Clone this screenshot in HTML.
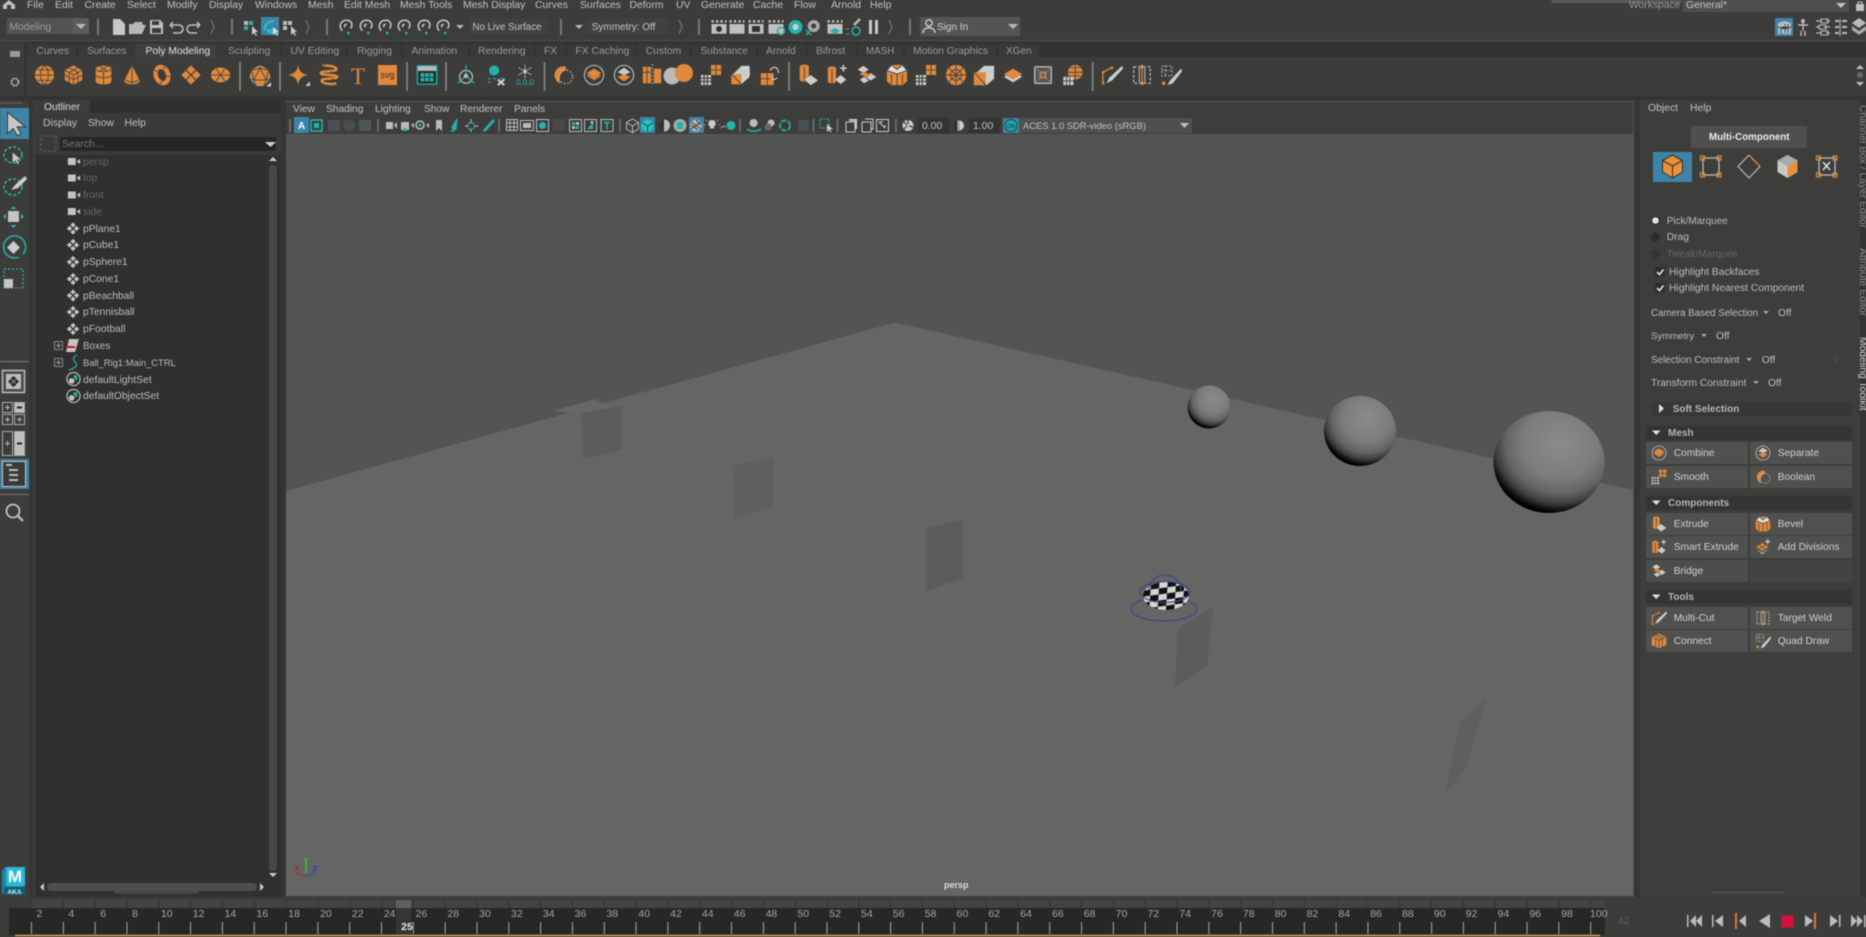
<!DOCTYPE html>
<html lang="en"><head><meta charset="utf-8"><title>Maya</title>
<style>
html,body{margin:0;padding:0;width:1866px;height:937px;overflow:hidden;background:#3c3d3b}
#w{position:absolute;left:0;top:0;width:1866px;height:937px;overflow:hidden;background:#3c3d3b;font-family:"Liberation Sans",sans-serif;filter:blur(.45px)}
.b{position:absolute}
.t{position:absolute;line-height:12px;height:12px;margin-top:1px;white-space:nowrap;font-size:10.3px;color:#bcbcba}
.m{color:#c2c2c0;font-size:10.4px}
.g{color:#9a9b99}
.d{color:#666765}
.k{color:#d0d0ce;font-size:10.2px}
.h{color:#b4b5b3;font-size:10.4px;font-weight:bold}
svg{position:absolute;left:0;top:0}
svg text{font-family:"Liberation Sans",sans-serif}
</style></head><body><div id="w">

<!-- panel backgrounds -->
<div class="b" style="left:0;top:40px;width:1866px;height:1px;background:#4a4b49"></div>
<div class="b" style="left:0;top:42px;width:1866px;height:15px;background:#323331"></div>
<div class="b" style="left:27px;top:44px;width:1012px;height:13px;background:#393a38"></div>
<div class="b" style="left:135px;top:44px;width:81px;height:13px;background:#3f403e"></div>
<div class="b" style="left:0;top:42px;width:24px;height:54px;background:#3c3d3b"></div>
<div class="b" style="left:24px;top:42px;width:3px;height:54px;background:#333432"></div>
<div class="b" style="left:0;top:96px;width:1866px;height:4px;background:#333432"></div>

<!-- top bar boxes -->
<div class="b" style="left:7px;top:18px;width:82px;height:16px;background:#535452"></div>
<div class="b" style="left:73px;top:18px;width:16px;height:16px;background:#5c5d5b"></div>
<div class="b" style="left:261px;top:17px;width:18px;height:18px;background:#3e83a8"></div>
<div class="b" style="left:470px;top:18px;width:79px;height:16px;background:#414240"></div>
<div class="b" style="left:587px;top:18px;width:82px;height:16px;background:#414240"></div>
<div class="b" style="left:920px;top:17px;width:100px;height:19px;background:#545553"></div>
<div class="b" style="left:1551px;top:0;width:131px;height:3px;background:#5a5b59;border-radius:0 0 4px 4px"></div>
<div class="b" style="left:1683px;top:0;width:166px;height:12px;background:#4f504e"></div>
<div class="b" style="left:1775px;top:18px;width:18px;height:18px;background:#3e83a8"></div>

<!-- left toolbox -->
<div class="b" style="left:29px;top:100px;width:4px;height:800px;background:#353634"></div>
<div class="b" style="left:0;top:108px;width:29px;height:31px;background:#3e83a8"></div>
<div class="b" style="left:0;top:361px;width:29px;height:1px;background:#7a7b79"></div>
<div class="b" style="left:0;top:459px;width:29px;height:30px;background:#3e83a8"></div>
<div class="b" style="left:0;top:494px;width:29px;height:1px;background:#7a7b79"></div>

<!-- outliner -->
<div class="b" style="left:35px;top:100px;width:246px;height:797px;background:#30312f"></div>
<div class="b" style="left:35px;top:113px;width:246px;height:42px;background:#3a3b39"></div>
<div class="b" style="left:35px;top:100px;width:55px;height:13px;background:#3c3d3b"></div>
<div class="b" style="left:60px;top:137px;width:216px;height:14px;background:#262725"></div>
<div class="b" style="left:269px;top:165px;width:8px;height:706px;background:#484947;border-radius:4px"></div>
<div class="b" style="left:47px;top:883px;width:210px;height:8px;background:#4e4f4d;border-radius:4px"></div>
<div class="b" style="left:281px;top:100px;width:5px;height:797px;background:#353634"></div>

<!-- viewport -->
<div class="b" style="left:286px;top:101px;width:1348px;height:796px;background:#3d3e3c;box-shadow:inset 0 1px 0 #525351,inset -1px 0 0 #525351"></div>
<div class="b" style="left:1003px;top:118px;width:16px;height:15px;background:#3e83a8"></div>
<div class="b" style="left:1019px;top:118px;width:173px;height:15px;background:#4f504e"></div>
<div class="b" style="left:918px;top:118px;width:31px;height:15px;background:#333432"></div>
<div class="b" style="left:969px;top:118px;width:31px;height:15px;background:#333432"></div>
<div class="b" style="left:640px;top:117px;width:15px;height:16px;background:#3e83a8"></div>
<div class="b" style="left:689px;top:117px;width:15px;height:16px;background:#3e83a8"></div>
<div class="b" style="left:294px;top:117px;width:15px;height:16px;background:#3e83a8"></div>

<!-- right panel -->
<div class="b" style="left:1634px;top:100px;width:6px;height:797px;background:#353634"></div>
<div class="b" style="left:1640px;top:100px;width:220px;height:800px;background:#3d3e3c"></div>
<div class="b" style="left:1860px;top:100px;width:6px;height:800px;background:#333432"></div>
<div class="b" style="left:1691px;top:126px;width:116px;height:22px;background:#4f504e"></div>
<div class="b" style="left:1653px;top:152px;width:39px;height:30px;background:#3e83a8"></div>
<div class="b" style="left:1652px;top:402px;width:200px;height:14px;background:#373836"></div>
<div class="b" style="left:1646px;top:426px;width:206px;height:14px;background:#343533"></div>
<div class="b" style="left:1646px;top:496px;width:206px;height:14px;background:#343533"></div>
<div class="b" style="left:1646px;top:590px;width:206px;height:14px;background:#343533"></div>
<div class="b" style="left:1646px;top:442px;width:102px;height:22px;background:#50514f"></div>
<div class="b" style="left:1750px;top:442px;width:102px;height:22px;background:#50514f"></div>
<div class="b" style="left:1646px;top:466px;width:102px;height:22px;background:#50514f"></div>
<div class="b" style="left:1750px;top:466px;width:102px;height:22px;background:#50514f"></div>
<div class="b" style="left:1646px;top:513px;width:102px;height:22px;background:#50514f"></div>
<div class="b" style="left:1750px;top:513px;width:102px;height:22px;background:#50514f"></div>
<div class="b" style="left:1646px;top:536px;width:102px;height:22px;background:#50514f"></div>
<div class="b" style="left:1750px;top:536px;width:102px;height:22px;background:#50514f"></div>
<div class="b" style="left:1646px;top:560px;width:102px;height:22px;background:#4d4e4c"></div>
<div class="b" style="left:1750px;top:560px;width:102px;height:22px;background:#434442"></div>
<div class="b" style="left:1646px;top:607px;width:102px;height:22px;background:#50514f"></div>
<div class="b" style="left:1750px;top:607px;width:102px;height:22px;background:#50514f"></div>
<div class="b" style="left:1646px;top:630px;width:102px;height:22px;background:#50514f"></div>
<div class="b" style="left:1750px;top:630px;width:102px;height:22px;background:#50514f"></div>

<!-- timeline bg -->
<div class="b" style="left:0;top:897px;width:1866px;height:40px;background:#3c3d3b"></div>
<div class="b" style="left:31px;top:900px;width:1574px;height:8px;background:#434442"></div>
<div class="b" style="left:9px;top:908px;width:1596px;height:27px;background:#272826"></div>
<div class="b" style="left:396px;top:900px;width:15px;height:8px;background:#5f605e"></div>
<div class="b" style="left:396px;top:908px;width:15px;height:27px;background:#363735"></div>

<!-- main overlay svg -->
<svg width="1866" height="937" viewBox="0 0 1866 937" xmlns="http://www.w3.org/2000/svg">
<defs>
<pattern id="chk" width="17" height="12" patternUnits="userSpaceOnUse" patternTransform="rotate(-8) skewX(-12)">
<rect width="17" height="12" fill="#d4d4d4"/><rect width="8.500" height="6" fill="#111"/><rect x="8.500" y="6" width="8.500" height="6" fill="#111"/></pattern>
<radialGradient id="sg" cx="60%" cy="32%" r="68%"><stop offset="0" stop-color="#8a8c89"/><stop offset=".5" stop-color="#7b7d7a"/><stop offset=".72" stop-color="#636562"/><stop offset=".86" stop-color="#3e3f3d"/><stop offset=".95" stop-color="#121212"/><stop offset="1" stop-color="#000"/></radialGradient>
<symbol id="sph" viewBox="0 0 24 24"><circle cx="12" cy="12" r="11" fill="#e0883b"/><path d="M1 12h22M3.500 6h17M3.500 18h17M12 1c-6 5-6 17 0 22M12 1c6 5 6 17 0 22" stroke="#44443f" fill="none"/></symbol>
<symbol id="cub" viewBox="0 0 24 24"><path d="M12 1L22 6.500V18L12 23L2 18V6.500z" fill="#e0883b"/><path d="M2 6.500L12 12L22 6.500M12 12V23M7 3.800L17 9.200M17 3.800L7 9.200M2 12L12 17.500L22 12M7 9.200V20.500M17 9.200V20.500" stroke="#44443f" fill="none"/></symbol>
<symbol id="cyl" viewBox="0 0 24 24"><path d="M3 5c0-5 18-5 18 0V19c0 5-18 5-18 0z" fill="#e0883b"/><path d="M3 5c0 4 18 4 18 0M3 12c0 4 18 4 18 0M12 8V23M7 1.500L17 8M17 1.500L7 8" stroke="#44443f" fill="none"/></symbol>
<symbol id="con" viewBox="0 0 24 24"><path d="M12 1L21 19c-2 5-16 5-18 0z" fill="#e0883b"/><path d="M4 17c2 4 14 4 16 0M12 1V23" stroke="#44443f" fill="none"/></symbol>
<symbol id="tor" viewBox="0 0 24 24"><ellipse cx="12" cy="12" rx="7" ry="9.500" fill="none" stroke="#e0883b" stroke-width="5" transform="rotate(-20 12 12)"/><path d="M3 6l5 3M16 1l-2 5M22 14l-5-1M10 23l2-5" stroke="#44443f"/></symbol>
<symbol id="pla" viewBox="0 0 24 24"><path d="M12 1L23 12L12 23L1 12z" fill="#e0883b"/><path d="M6.500 6.500L17.500 17.500M17.500 6.500L6.500 17.500" stroke="#44443f" stroke-width="1.400"/></symbol>
<symbol id="dis" viewBox="0 0 24 24"><ellipse cx="12" cy="12" rx="11" ry="8.500" fill="#e0883b"/><path d="M1 12h22M7 5l10 14M17 5L7 19" stroke="#44443f" fill="none"/></symbol>
<symbol id="plt" viewBox="0 0 24 24"><path d="M12 1L21 6 23 15 16 23H8L1 15 3 6z" fill="#e0883b" stroke="#bbb" stroke-width=".6"/><path d="M12 4L5 17H19zM12 1V4M3 6L12 4 21 6M1 15L5 17 8 23M23 15L19 17 16 23M5 17L3 6M19 17 21 6" stroke="#44443f" fill="none"/><path d="M24 24V19L19 24z" fill="#ccc"/></symbol>
<symbol id="str" viewBox="0 0 24 24"><path d="M11 1C12 8 15 11 22 12C15 13 12 16 11 23C10 16 7 13 0 12C7 11 10 8 11 1z" fill="#e0883b"/><path d="M24 24V19L19 24z" fill="#ccc"/></symbol>
<symbol id="hel" viewBox="0 0 24 24"><path d="M5 2C11 1 21 3 20 6C18 9 4 7 3 10C3 13 21 11 21 14C20 17 4 15 4 18C4 21 13 23 20 21" fill="none" stroke="#e0883b" stroke-width="2.800"/><path d="M8 1l-3 3M16 8l-3 2M7 13l3 2M17 16l-3 2" stroke="#44443f"/></symbol>
<symbol id="tbl" viewBox="0 0 24 24"><rect x="1.500" y="2" width="21" height="20" fill="#2b2c2a" stroke="#23b3ae" stroke-width="1.400"/><rect x="2" y="2.500" width="20" height="5" fill="#bbb"/><path d="M5 10h4v4H5zM10 10h4v4h-4zM15 10h4v4h-4zM5 15h4v4H5zM10 15h4v4h-4zM15 15h4v4h-4z" fill="#23b3ae"/></symbol>
<symbol id="lct" viewBox="0 0 24 24"><circle cx="12" cy="14" r="7" fill="none" stroke="#bbb" stroke-width="1.400"/><path d="M12 1V13M12 13L3 21M12 13L21 21" stroke="#23b3ae" stroke-width="1.400"/><circle cx="12" cy="13" r="2.400" fill="#bbb"/></symbol>
<symbol id="pvt" viewBox="0 0 24 24"><circle cx="10" cy="7" r="5.500" fill="#23b3ae"/><path d="M10 4v3h3M3 16h3M9 16h3M16 16h6M3 20h3" stroke="#23b3ae" stroke-width="1.300" fill="none"/><path d="M14 17l7 6M21 17l-7 6" stroke="#ddd" stroke-width="2"/></symbol>
<symbol id="frz" viewBox="0 0 24 24"><path d="M12 1V15M5 4l14 8M19 4L5 12" stroke="#bbb" stroke-width="1.200" stroke-dasharray="2 1"/><circle cx="12" cy="8" r="2" fill="#ccc"/></symbol>
<symbol id="bol" viewBox="0 0 24 24"><path d="M15 3C8 1 2 7 3 14C4 18 6 20 9 21C7 15 9 9 15 7z" fill="#e0883b"/><path d="M15 3C8 1 2 7 3 14C5 12 8 9 15 7z" fill="#e0883b"/><circle cx="15" cy="14" r="7.500" fill="none" stroke="#bbb" stroke-width="1.200" stroke-dasharray="2 2"/></symbol>
<symbol id="cmb" viewBox="0 0 24 24"><circle cx="12" cy="12" r="10.500" fill="none" stroke="#bbb" stroke-width="1.200"/><path d="M12 5L20 10L12 15L4 10z" fill="#e0883b"/><path d="M4 13L12 18L20 13L12 8z" fill="#e0883b" opacity=".85"/></symbol>
<symbol id="sep" viewBox="0 0 24 24"><circle cx="12" cy="12" r="10.500" fill="none" stroke="#bbb" stroke-width="1.200"/><path d="M12 4L19 9L12 12L5 9z" fill="#ccc"/><path d="M5 14L12 11L19 14L12 19z" fill="#e0883b"/></symbol>
<symbol id="dbl" viewBox="0 0 24 24"><path d="M2 3h9v18H2z" fill="#e0883b"/><path d="M6.500 3v18M2 9h9" stroke="#44443f"/><path d="M14 5h8v16h-8z" fill="#e0883b"/><path d="M12.500 0v24" stroke="#bbb" stroke-dasharray="2 2"/></symbol>
<symbol id="sbl" viewBox="0 0 24 24"><path d="M12 1h11v11H12z" fill="#e0883b"/><path d="M17.500 1v11M12 6.500h11" stroke="#44443f"/><path d="M1 12h11v11H1z" fill="#ccc"/><path d="M4.500 12v11M8 12v11M1 15.500h11M1 19h11" stroke="#3c3d3b" stroke-width="1.200"/></symbol>
<symbol id="tri" viewBox="0 0 24 24"><path d="M13 2L22 2 22 14 13 22 3 22V12z" fill="#ccc"/><path d="M2 11H13V22H2z" fill="#e0883b"/><path d="M2 11L13 22" stroke="#44443f"/><path d="M14 5c4-3 8 0 7 5M20 13l-2 2M21 8l1 3" fill="none" stroke="#ddd" stroke-width="1.200"/></symbol>
<symbol id="tr2" viewBox="0 0 24 24"><path d="M2 10H16V23H2z" fill="#e0883b"/><path d="M2 16H16M9 10V23" stroke="#44443f"/><path d="M12 7c4-6 10-3 9 3M20 15c-3 3-5 2-7 0" fill="none" stroke="#ddd" stroke-width="1.200"/></symbol>
<symbol id="ext" viewBox="0 0 24 24"><path d="M3 3c0-3 10-3 10 0V17c0 3-10 3-10 0z" fill="#e0883b"/><path d="M8 3V20" stroke="#44443f"/><path d="M8 17L15 12L23 18L15 23z" fill="#ccc"/></symbol>
<symbol id="sme" viewBox="0 0 24 24"><path d="M2 5c0-3 9-3 9 0V19c0 3-9 3-9 0z" fill="#e0883b"/><path d="M6.500 5V22" stroke="#44443f"/><path d="M10 17L16 12L22 17L16 22z" fill="#ccc"/><path d="M19 1V8M15.500 4.500H22.500" stroke="#ddd" stroke-width="1.500"/></symbol>
<symbol id="brg" viewBox="0 0 24 24"><path d="M2 6L8 2L14 6L8 10z" fill="#ccc"/><path d="M10 14L16 10L22 14L16 18z" fill="#ccc"/><path d="M8 8L16 12L12 15L4 11z" fill="#e0883b"/><path d="M4 17L9 14L14 18L9 21z" fill="#ccc"/></symbol>
<symbol id="bev" viewBox="0 0 24 24"><path d="M6 1H18L23 7V19L18 23H6L1 19V7z" fill="#e0883b"/><path d="M6 1L12 6L18 1L23 7L12 11L1 7zM12 11V23" fill="#ddd" stroke="#44443f"/><path d="M6 11V22M18 11V22" stroke="#44443f" fill="none"/></symbol>
<symbol id="adv" viewBox="0 0 24 24"><path d="M2 12L11 6L20 12L11 18z" fill="#e0883b"/><path d="M6.500 9L15 15M15 9L6.500 15" stroke="#44443f"/><path d="M2 15L11 21L20 15L11 23z" fill="#ccc"/><path d="M19 0V8M15 4H23" stroke="#ddd" stroke-width="1.500"/></symbol>
<symbol id="mcu" viewBox="0 0 24 24"><path d="M2 9L12 4" stroke="#e0883b" stroke-width="1.400"/><path d="M2 9V22" stroke="#e0883b" stroke-width="1.400"/><circle cx="2.500" cy="9" r="1.500" fill="#e0883b"/><circle cx="12" cy="4" r="1.500" fill="#e0883b"/><circle cx="2.500" cy="21" r="1.500" fill="#e0883b"/><path d="M23 2L9 15L6 21L12 18L24 5z" fill="#ccc"/></symbol>
<symbol id="twd" viewBox="0 0 24 24"><path d="M3 3H21V21H3z" fill="none" stroke="#ccc" stroke-width="1.200" stroke-dasharray="3 2"/><path d="M9 4V20M15 4V20" stroke="#ccc"/><path d="M12 2V22" stroke="#e0883b" stroke-width="1.400"/><circle cx="12" cy="3" r="2" fill="#e0883b"/><circle cx="12" cy="21" r="2" fill="#e0883b"/></symbol>
<symbol id="qdr" viewBox="0 0 24 24"><path d="M2 2h11v11H2z" fill="none" stroke="#ccc" stroke-dasharray="2 2"/><path d="M6 2v11M2 7h11" stroke="#ccc" stroke-dasharray="2 2"/><path d="M23 5L11 18L8 23L14 21L24 8z" fill="#ccc"/><circle cx="4" cy="21" r="2" fill="#e0883b"/></symbol>
<symbol id="con2" viewBox="0 0 24 24"><path d="M12 1L23 6V18L12 23L1 18V6z" fill="#e0883b"/><path d="M1 6L12 11L23 6M12 11V23M5 4L16 9M9 2.500L20 7.500M7 9V21M17 9V21" stroke="#44443f" fill="none"/></symbol>
<symbol id="wld" viewBox="0 0 24 24"><path d="M3 3H21V21H3z" fill="#555" stroke="#bbb" stroke-width="1.500"/><path d="M3 3L21 21M21 3L3 21" stroke="#777" stroke-width="1.200"/><rect x="9" y="9" width="6" height="6" fill="none" stroke="#e0883b" stroke-width="1.500"/></symbol>
<symbol id="gbl" viewBox="0 0 24 24"><circle cx="15" cy="9" r="8" fill="#e0883b"/><path d="M7 9H23M15 1V17M9 4H21M9 13H21" stroke="#44443f"/><path d="M2 14h11v9H2z" fill="#ccc"/><path d="M5.500 14v9M9 14v9M2 18.500h11" stroke="#3c3d3b"/></symbol>
<symbol id="bg1" viewBox="0 0 24 24"><circle cx="12" cy="12" r="11" fill="#e0883b"/><path d="M1 12H23M12 1V23M4 4L20 20M20 4L4 20" stroke="#44443f"/><circle cx="12" cy="12" r="6" fill="none" stroke="#44443f"/></symbol>
<symbol id="cb1" viewBox="0 0 24 24"><path d="M12 2L23 2V16L15 23H1V12z" fill="#ccc"/><path d="M1 9H14V23H1z" fill="#e0883b"/><path d="M1 9L14 23" stroke="#44443f"/></symbol>
<symbol id="lay" viewBox="0 0 24 24"><path d="M2 14L12 8L22 14L12 20z" fill="#ccc"/><path d="M2 11L12 5L22 11L12 17z" fill="#e0883b"/></symbol>
<symbol id="dia" viewBox="0 0 16 16"><path d="M8 1L11 4L8 7L5 4zM8 9L11 12L8 15L5 12zM1 8L4 5L7 8L4 11zM9 8L12 5L15 8L12 11z" fill="#c4c4c2"/></symbol>
<symbol id="cam" viewBox="0 0 16 12"><rect x="1" y="2" width="9" height="8" fill="#c4c4c2"/><path d="M11 6L15 3V9z" fill="#c4c4c2"/></symbol>
<symbol id="set" viewBox="0 0 16 16"><circle cx="8" cy="8" r="7" fill="none" stroke="#c4c4c2" stroke-width="1.200"/><circle cx="6" cy="10" r="3" fill="#c4c4c2"/><path d="M8 4h4v5H9.500V6.500H8z" fill="#23b3ae"/></symbol>
<symbol id="arw" viewBox="0 0 24 24"><path d="M4 2L4 21L9 16.500L13 23L16 21L12.500 15H20z" fill="#c6c6c4" stroke="#2e2f2d" stroke-width=".8"/></symbol>
<symbol id="mag" viewBox="0 0 24 24"><path d="M7 17C1 10 6 3 13 3C19 3 22 9 18 14M11 12C9 10 11 8 13 9" fill="none" stroke="#c8c8c6" stroke-width="2"/><circle cx="15" cy="20" r="1.800" fill="#23b3ae"/></symbol>
<symbol id="clp" viewBox="0 0 24 24"><path d="M2 4.500h20" stroke="#ccc" stroke-width="3" stroke-dasharray="3 3"/><rect x="2" y="8" width="20" height="13" fill="#c0c0be"/></symbol>
</defs>

<!-- viewport 3D -->
<rect x="286" y="134" width="1347" height="762" fill="#535552"/>
<path d="M286 491L895 322.500L1633 490V896H286z" fill="#646663"/>
<path d="M553 411L595 399L613 408L581 413z" fill="#666865"/>
<path d="M581 414L622 405V450L583 459z" fill="#5b5d5a"/>
<path d="M733 466L773 457V506L735 519z" fill="#5e605d"/>
<path d="M926 528L963 520V578L926 591z" fill="#5b5d5a"/>
<path d="M1178 629L1213 607L1207 666L1175 687z" fill="#5b5d5a"/>
<path d="M1460 722L1486 699L1466 768L1445 794z" fill="#5e605d"/>
<circle cx="1209" cy="407" r="21.500" fill="url(#sg)"/>
<ellipse cx="1360" cy="431" rx="36" ry="35" fill="url(#sg)"/>
<ellipse cx="1549" cy="462" rx="55.500" ry="51" fill="url(#sg)"/>
<!-- rig ball -->
<ellipse cx="1164" cy="609" rx="33" ry="12" fill="none" stroke="#44448a" stroke-width="1.200"/>
<ellipse cx="1166" cy="596" rx="23" ry="14" fill="url(#chk)"/>
<ellipse cx="1165" cy="592" rx="25" ry="10.500" fill="none" stroke="#44448a" stroke-width="1.200"/>
<path d="M1149 590C1150 570 1180 570 1181 590" fill="none" stroke="#44448a" stroke-width="1.200"/>
<!-- axis -->
<path d="M306 873V861" stroke="#35d035" stroke-width="1.300"/>
<path d="M296 872C300 875 303 876 306 876" stroke="#b02030" fill="none"/>
<path d="M306 876C310 876 313 874 315 872" stroke="#2a3ac0" fill="none"/>
<text x="306" y="863" font-size="7.500" font-weight="bold" fill="#35d035" text-anchor="middle">Y</text>
<text x="296.500" y="871" font-size="7.500" font-weight="bold" fill="#b02030" text-anchor="middle">X</text>
<text x="315" y="871" font-size="7.500" font-weight="bold" fill="#2a3ac0" text-anchor="middle">Z</text>

<!-- menu home -->
<path d="M3 9V5L9 0L15 5V9H11V5H7V9z" fill="#c0c0be"/>

<!-- top toolbar seps -->
<path d="M98 19v16M232 19v16M327 19v16M561 19v16M699 19v16M910 19v16" stroke="#777" stroke-width="2"/>
<path d="M211 20l3 7-3 7M306 20l3 7-3 7M679 20l3 7-3 7M889 20l3 7-3 7" stroke="#6f706e" stroke-width="1.300" fill="none"/>
<path d="M76 24h10l-5 5z" fill="#b8b8b6"/>
<path d="M456 25h8l-4 4zM575 25h8l-4 4zM1008 24h10l-5 5z" fill="#b8b8b6"/>
<!-- doc folder save undo redo -->
<path d="M113 19h7l5 5v11h-12z" fill="#c8c8c6"/>
<path d="M129 24h4l2-2h7l1 3h3l-4 9h-13z" fill="#b8b8b6"/>
<path d="M150 20h10l3 3v11h-13z" fill="#c0c0be"/><rect x="152" y="21" width="7" height="4" fill="#3c3d3b"/><rect x="152" y="28" width="9" height="5" fill="#3c3d3b"/>
<path d="M170 25h9a4 4 0 0 1 0 8h-6M170 25l3-3M170 25l3 3" fill="none" stroke="#c0c0be" stroke-width="1.500"/>
<path d="M200 25h-9a4 4 0 0 0 0 8h6M200 25l-3-3M200 25l-3 3" fill="none" stroke="#c0c0be" stroke-width="1.500"/>
<!-- selection mask -->
<rect x="244" y="21" width="4" height="4" fill="#bbb"/><rect x="249" y="21" width="4" height="4" fill="#23b3ae"/><rect x="244" y="26" width="4" height="4" fill="#23b3ae"/><path d="M252 26v9l2-2 2 3 1-1-2-3h3z" fill="#ccc"/>
<path d="M265 30c-1-5 3-9 9-9M268 30a3 3 0 1 0 6 0z" fill="none" stroke="#23d0c8" stroke-width="1.600"/><path d="M273 27v8l2-2 2 3 1-1-2-3h3z" fill="#ddd"/>
<rect x="283" y="21" width="4" height="4" fill="#bbb"/><rect x="288" y="21" width="4" height="4" fill="#bbb"/><rect x="283" y="26" width="4" height="4" fill="#bbb"/><path d="M291 26v9l2-2 2 3 1-1-2-3h3z" fill="#ccc"/>
<!-- magnets -->
<use href="#mag" x="337" y="18" width="18" height="18"/><use href="#mag" x="357" y="18" width="18" height="18"/><use href="#mag" x="376" y="18" width="18" height="18"/><use href="#mag" x="395" y="18" width="18" height="18"/><use href="#mag" x="415" y="18" width="18" height="18"/><use href="#mag" x="434" y="18" width="18" height="18"/>
<!-- render icons -->
<use href="#clp" x="710" y="18" width="18" height="18"/><circle cx="719" cy="29" r="3" fill="#333"/>
<use href="#clp" x="728" y="18" width="18" height="18"/>
<use href="#clp" x="747" y="18" width="18" height="18"/><rect x="752" y="26" width="8" height="6" fill="#333"/>
<use href="#clp" x="767" y="18" width="18" height="18"/><circle cx="781" cy="31" r="3.500" fill="none" stroke="#23b3ae" stroke-width="1.500"/>
<circle cx="795.500" cy="27" r="7" fill="#23b3ae"/><circle cx="795.500" cy="27" r="3" fill="#cfcfcf"/>
<circle cx="813.700" cy="26" r="6" fill="#aaa"/><circle cx="813.700" cy="26" r="2.500" fill="#3c3d3b"/><path d="M806 30l5 5M811 30l-5 5" stroke="#23b3ae" stroke-width="1.300"/>
<use href="#clp" x="826" y="18" width="18" height="18"/><path d="M835 28l5 3-5 3-5-3z" fill="#23b3ae"/>
<path d="M860 19l-6 6" stroke="#bbb" stroke-width="2.500"/><circle cx="856" cy="31" r="4" fill="none" stroke="#23b3ae" stroke-width="1.400"/><path d="M846 34h3M846 29h3" stroke="#23b3ae"/>
<rect x="869" y="20" width="3" height="14" fill="#c8c8c6"/><rect x="875" y="20" width="3" height="14" fill="#c8c8c6"/>
<circle cx="929" cy="23" r="3.200" fill="none" stroke="#ccc" stroke-width="1.400"/><path d="M923 33c0-7 12-7 12 0" fill="none" stroke="#ccc" stroke-width="1.400"/>
<!-- top right -->
<path d="M1836 3h10l-5 5z" fill="#c0c0be"/>
<rect x="1856" y="4" width="8" height="7" fill="#c0c0be"/>
<path d="M1858 4V2h4v2" stroke="#c0c0be" fill="none"/>
<path d="M1778 23l7-2 6 2v11h-13z" fill="#bbb"/><path d="M1778 27l7 2 6-2M1785 24v9M1788 24v9M1781 27v7" stroke="#355a70"/>
<circle cx="1803" cy="21" r="2" fill="#bbb"/><path d="M1803 23v8M1798 25h10M1801 31v5M1805 31v5" stroke="#bbb" stroke-width="1.400"/>
<path d="M1816 21h6M1826 21h4M1816 27h4M1824 27h6M1816 33h6M1826 33h4" stroke="#bbb" stroke-width="1.300"/>
<rect x="1821" y="19" width="7" height="4" fill="none" stroke="#bbb"/><rect x="1819" y="25" width="7" height="4" fill="none" stroke="#bbb"/><rect x="1821" y="31" width="7" height="4" fill="none" stroke="#bbb"/>
<path d="M1835 21h4M1835 27h4M1835 33h4M1842 21h5M1842 27h5M1842 33h5" stroke="#bbb" stroke-width="2"/><path d="M1840 19v17" stroke="#bbb"/>
<path d="M1859 18l7 5-7 5-7-5z" fill="#bbb"/><path d="M1852 26l7 5 7-5v4l-7 5-7-5z" fill="#aaa"/>
<!-- shelf -->
<path d="M10 51h10v6H10z" fill="#9a9b99"/>
<circle cx="15" cy="82" r="3.500" fill="none" stroke="#bbb" stroke-width="1.800" stroke-dasharray="2 .8"/>
<path d="M240 62v29M280 62v29M407 62v29M446 62v29M544.500 62v29M789 62v29M1092.700 62v29" stroke="#888" stroke-width="1.600"/>
<use href="#sph" x="34" y="64.500" width="21" height="21"/>
<use href="#cub" x="63" y="64.500" width="21" height="21"/>
<use href="#cyl" x="93" y="64.500" width="21" height="21"/>
<use href="#con" x="121.500" y="64.500" width="21" height="21"/>
<use href="#tor" x="151.500" y="64.500" width="21" height="21"/>
<use href="#pla" x="180.500" y="64.500" width="21" height="21"/>
<use href="#dis" x="210" y="64.500" width="21" height="21"/>
<use href="#plt" x="249" y="64.500" width="22" height="22"/>
<use href="#str" x="288" y="64" width="22" height="22"/>
<use href="#hel" x="318" y="64" width="22" height="22"/>
<text x="358" y="84" font-size="23" fill="#e0883b" text-anchor="middle" style="font-family:'Liberation Serif',serif">T</text>
<rect x="378" y="65" width="19" height="20" fill="#e0883b"/><text x="387.500" y="78" font-size="9" fill="#2e2e2e" text-anchor="middle">svg</text>
<use href="#tbl" x="416" y="64" width="22" height="22"/>
<use href="#lct" x="455" y="64" width="22" height="22"/>
<use href="#pvt" x="485" y="64" width="22" height="22"/>
<use href="#frz" x="514" y="64" width="22" height="22"/>
<text x="525" y="85" font-size="8" fill="#23b3ae" text-anchor="middle">0,0,0</text>
<use href="#bol" x="552" y="64" width="22" height="22"/>
<use href="#cmb" x="583" y="64" width="22" height="22"/>
<use href="#sep" x="613" y="64" width="22" height="22"/>
<use href="#dbl" x="641" y="64" width="22" height="22"/>
<circle cx="672" cy="76" r="8.500" fill="#bbb"/><circle cx="684" cy="73" r="9" fill="#e0883b"/>
<use href="#sbl" x="700" y="64" width="22" height="22"/>
<use href="#tri" x="729.500" y="64" width="22" height="22"/>
<use href="#tr2" x="759" y="64" width="22" height="22"/>
<use href="#ext" x="797" y="64" width="22" height="22"/>
<use href="#sme" x="826" y="64" width="22" height="22"/>
<use href="#brg" x="856" y="64" width="22" height="22"/>
<use href="#bev" x="886" y="64" width="22" height="22"/>
<use href="#sbl" x="915" y="64" width="22" height="22"/>
<use href="#bg1" x="945" y="64" width="22" height="22"/>
<use href="#cb1" x="973" y="64" width="22" height="22"/>
<use href="#lay" x="1002" y="64" width="22" height="22"/>
<use href="#wld" x="1032" y="64" width="22" height="22"/>
<use href="#gbl" x="1061.500" y="64" width="22" height="22"/>
<use href="#mcu" x="1101" y="64" width="22" height="22"/>
<use href="#twd" x="1131" y="64" width="22" height="22"/>
<use href="#qdr" x="1160" y="64" width="22" height="22"/>
<path d="M1856 69l4-4 4 4z" fill="#bbb"/><circle cx="1860" cy="75" r="3" fill="#666"/><path d="M1856 82l4 4 4-4z" fill="#bbb"/>
<!-- tab separators -->
<path d="M77 44v13M281 44v13M347 44v13M402 44v13M469 44v13M535 44v13M566 44v13M636 44v13M691 44v13M757 44v13M807 44v13M857 44v13M904 44v13M997 44v13" stroke="#323331" stroke-width="2"/>

<!-- left toolbox icons -->
<path d="M22 103h-22" stroke="#6a6b69" stroke-dasharray="1 1" stroke-width="2"/>
<use href="#arw" x="3" y="110" width="27" height="27"/>
<ellipse cx="13" cy="155" rx="9" ry="8" fill="none" stroke="#23b3ae" stroke-width="1.600" stroke-dasharray="3 2"/><use href="#arw" x="10" y="149" width="14" height="18"/>
<ellipse cx="13" cy="187" rx="9" ry="8" fill="none" stroke="#23b3ae" stroke-width="1.600" stroke-dasharray="3 2"/><path d="M25 176l-9 8-5 6 7-2 9-9z" fill="#ccc"/>
<rect x="8" y="211" width="11" height="11" fill="#c4c4c2"/><path d="M13.500 206l3 3h-6zM13.500 228l3-3h-6zM3 216.500l3-3v6zM24 216.500l-3-3v6z" fill="#23b3ae"/>
<path d="M13.500 241l6.500 6.500-6.500 6.500-6.500-6.500z" fill="#ccc"/><path d="M23 254a11 11 0 1 0-4 3" fill="none" stroke="#23b3ae" stroke-width="1.500"/>
<rect x="4" y="269" width="19" height="19" fill="none" stroke="#23b3ae" stroke-width="1.300" stroke-dasharray="2 2"/><rect x="4" y="279" width="9" height="9" fill="#c4c4c2"/>
<!-- layout buttons -->
<rect x="2.500" y="370.500" width="22" height="22" fill="#4a4b49" stroke="#c4c4c2" stroke-width="1.400"/><rect x="6" y="374" width="15" height="15" fill="#bcbcba"/>
<path d="M13.500 376l3 2.500-3 2.500-3-2.500zM13.500 382l3 2.500-3 2.500-3-2.500zM8 381.500l2.500-2.500 2.500 2.500-2.500 2.500zM14 381.500l2.500-2.500 2.500 2.500-2.500 2.500z" fill="#2a2b29"/>
<rect x="2.500" y="402.500" width="10" height="10" fill="#3c3d3b" stroke="#aaa"/><rect x="14.500" y="402.500" width="10" height="10" fill="#c0c0be" stroke="#aaa"/><rect x="2.500" y="414.500" width="10" height="10" fill="#3c3d3b" stroke="#aaa"/><rect x="14.500" y="414.500" width="10" height="10" fill="#3c3d3b" stroke="#aaa"/>
<path d="M5 407.500h5M7.500 405v5M5 419.500h5M7.500 417v5M17 419.500h5M19.500 417v5" stroke="#bbb"/><path d="M17 407.500h5" stroke="#222" stroke-width="2"/>
<rect x="2.500" y="431.500" width="10" height="24" fill="#3c3d3b" stroke="#aaa"/><rect x="14.500" y="431.500" width="10" height="24" fill="#c0c0be" stroke="#aaa"/>
<path d="M5 443.500h5M7.500 441v5" stroke="#bbb"/><path d="M17 443.500h5" stroke="#222" stroke-width="2"/>
<rect x="2.500" y="461.500" width="23" height="25" fill="#3a3b39" stroke="#c4c4c2"/><path d="M6 465h6M9 470h9M9 475h9M9 480h9" stroke="#bbb" stroke-width="2"/>
<circle cx="13" cy="511" r="6.500" fill="none" stroke="#c4c4c2" stroke-width="1.800"/><path d="M18 516l5 5" stroke="#c4c4c2" stroke-width="2.200"/>
<!-- Maya logo -->
<path d="M5 867l-3 4v22l3 2h18V867z" fill="#1689a6"/><rect x="6" y="867" width="19" height="19" fill="#2ab8d8"/>
<text x="15" y="882" font-size="17" font-weight="bold" fill="#fff" text-anchor="middle">M</text>
<rect x="4" y="887" width="21" height="8" fill="#115f74"/><text x="14.500" y="894" font-size="6.500" font-weight="bold" fill="#dfeff4" text-anchor="middle">AKA</text>

<!-- outliner icons -->
<rect x="41" y="136" width="15" height="15" fill="none" stroke="#555" stroke-width="1.600" stroke-dasharray="3 2"/>
<path d="M265 142h11l-5.500 5z" fill="#ccc"/>
<path d="M269 161l4-4 4 4z" fill="#ccc"/>
<use href="#cam" x="67" y="155.500" width="14" height="12"/><use href="#cam" x="67" y="172" width="14" height="12"/><use href="#cam" x="67" y="189" width="14" height="12"/><use href="#cam" x="67" y="205.500" width="14" height="12"/>
<use href="#dia" x="66" y="220.500" width="14" height="16"/><use href="#dia" x="66" y="237" width="14" height="16"/><use href="#dia" x="66" y="254" width="14" height="16"/><use href="#dia" x="66" y="271" width="14" height="16"/><use href="#dia" x="66" y="287.500" width="14" height="16"/><use href="#dia" x="66" y="304" width="14" height="16"/><use href="#dia" x="66" y="321" width="14" height="16"/>
<rect x="54.500" y="341.500" width="8" height="8" fill="none" stroke="#888"/><path d="M56 345.500h5M58.500 343v5" stroke="#999"/>
<rect x="54.500" y="358.500" width="8" height="8" fill="none" stroke="#888"/><path d="M56 362.500h5M58.500 360v5" stroke="#999"/>
<path d="M69 339h10l-4 13h-9z" fill="#c4c4c2"/><path d="M66 347h9" stroke="#d01030" stroke-width="2"/>
<path d="M77 355c-6 3-3 6-1 8 2 3-3 6-7 7" fill="none" stroke="#23b3ae" stroke-width="1.200"/>
<use href="#set" x="66" y="371.500" width="15" height="15"/><use href="#set" x="66" y="388.500" width="15" height="15"/>
<path d="M269 873h8l-4 4z" fill="#ccc"/><path d="M44 883l-4 4 4 4zM260 883l4 4-4 4z" fill="#ccc"/>
<path d="M115 892.500h83" stroke="#5c5d5b" stroke-width="3" stroke-dasharray="1 1"/>

<!-- viewport toolbar -->
<path d="M290 119v13M378 119v13M499 119v13M620 119v13M740 119v13M813.500 119v13M837.500 119v13M896 119v13" stroke="#777" stroke-width="1.400"/>
<text x="301.500" y="129" font-size="10" font-weight="bold" fill="#fff" text-anchor="middle">A</text>
<rect x="311" y="120" width="11" height="11" fill="none" stroke="#23b3ae" stroke-width="1.500"/><rect x="314" y="123" width="5" height="5" fill="#23b3ae"/>
<rect x="328" y="120" width="12" height="11" fill="#4a5054"/><circle cx="349" cy="125.500" r="6" fill="#4b4d4b"/><rect x="359" y="120" width="12" height="11" fill="#4a5a50"/>
<path d="M386 122h7v7h-7zM394 125l3-3v7z" fill="#bbb"/>
<path d="M401 122h8v8h-8z" fill="#bbb"/><path d="M403 131h4v-3h-4z" fill="#23b3ae"/><path d="M411 125l3-2v5z" fill="#bbb"/>
<circle cx="420" cy="125" r="4" fill="none" stroke="#bbb" stroke-width="1.500"/><circle cx="420" cy="125" r="1.600" fill="#23b3ae"/><path d="M426 125l3-2v5z" fill="#bbb"/>
<path d="M436 120h6v11l-3-3-3 3z" fill="#bbb"/>
<path d="M457 119l-5 8 1 3 3-1zM450 131h5" stroke="#23b3ae" fill="#23b3ae"/>
<circle cx="471" cy="126" r="3.500" fill="none" stroke="#23b3ae"/><path d="M471 119v4M471 129v3M465 126h3M475 126h3" stroke="#bbb"/>
<path d="M493 119l-9 10-1 3 3-1 9-10z" fill="#23b3ae"/>
<rect x="506.500" y="119.500" width="11" height="11" fill="none" stroke="#bbb"/><path d="M506 123h12M506 127h12M510 119v12M514 119v12" stroke="#bbb"/>
<rect x="520.500" y="120.500" width="13" height="10" fill="none" stroke="#bbb"/><rect x="523" y="123" width="8" height="5" fill="#bbb"/>
<rect x="536.500" y="119.500" width="12" height="12" fill="none" stroke="#bbb"/><circle cx="542.500" cy="125.500" r="3.500" fill="#23b3ae"/>
<rect x="553" y="119" width="12" height="12" fill="#484947"/>
<rect x="569.500" y="119.500" width="12" height="12" fill="none" stroke="#bbb"/><path d="M572 122h3v3h-3zM576 126h3v3h-3z" fill="#23b3ae"/><path d="M576 122h3v3h-3zM572 126h3v3h-3z" fill="#bbb"/>
<rect x="584.500" y="119.500" width="12" height="12" fill="none" stroke="#bbb"/><path d="M587 129l6-6v6z" fill="#23b3ae"/><circle cx="592" cy="122.500" r="1.500" fill="#bbb"/>
<rect x="601" y="119.500" width="12" height="12" fill="none" stroke="#bbb"/><path d="M604 122.500h6M607 122.500v7" stroke="#23b3ae" stroke-width="1.600"/>
<path d="M632.500 119l6 3.500v6.500l-6 3.500-6-3.500v-6.500zM626.500 122.500l6 3.500 6-3.500M632.500 126v6.500" fill="none" stroke="#bbb"/>
<path d="M647.500 119l6 3.500v6.500l-6 3.500-6-3.500v-6.500z" fill="#23c5c0"/><path d="M641.500 122.500l6 3.500 6-3.500M647.500 126v6.500" fill="none" stroke="#254a5c"/>
<circle cx="664" cy="125.500" r="6" fill="#bbb"/><path d="M664 119.500a6 6 0 0 0 0 12z" fill="#333"/>
<circle cx="680" cy="125.500" r="6.500" fill="#aaa"/><path d="M677 122h6v7h-6z" fill="#23b3ae"/>
<circle cx="696" cy="125.500" r="6" fill="#bbb"/><path d="M691 122l10 7M701 122l-10 7M691 125l7 5M696 120l5 5" stroke="#333"/>
<path d="M712 120a3.500 3.500 0 0 1 2 6.500v2h-4v-2a3.500 3.500 0 0 1 2-6.500z" fill="#c8c8c6"/><path d="M707 121l-1-1M717 121l1-1M705 125h-1M719 125h1" stroke="#bbb"/>
<circle cx="731" cy="125.500" r="4.500" fill="#23b3ae"/><path d="M721 128c2-2 3-2 5-1" stroke="#aaa" fill="none"/>
<circle cx="753.600" cy="123" r="4" fill="#bbb"/><path d="M747 129c4 3 10 3 14 0" fill="none" stroke="#23b3ae" stroke-width="1.500"/>
<circle cx="771" cy="123" r="3.500" fill="#bbb"/><circle cx="768" cy="127" r="3.500" fill="#666"/>
<circle cx="785" cy="125.500" r="5" fill="none" stroke="#23b3ae" stroke-width="1.700" stroke-dasharray="5 1.500"/>
<rect x="798" y="120" width="11" height="11" fill="#455058"/>
<rect x="820" y="119" width="9" height="9" fill="none" stroke="#23b3ae" stroke-dasharray="2 1.300"/><path d="M827 124v8l2-2 1.500 2.500 1-.7-1.500-2.500h3z" fill="#ccc"/>
<path d="M846 122h9v10h-9z" fill="none" stroke="#ccc"/><path d="M849 119h8v10h-2v-8h-6z" fill="#ccc"/>
<path d="M862 122h9v10h-9z" fill="none" stroke="#ccc"/><path d="M865 119h8v10h-2" fill="none" stroke="#ccc"/>
<rect x="876.500" y="119.500" width="12" height="12" fill="none" stroke="#ccc"/><path d="M879 122l6 6M879 122h4M885 128v-3" stroke="#ccc"/>
<circle cx="908" cy="125.500" r="5.500" fill="#ccc"/><path d="M908 120v4M913 127l-4-1M904 129l3-3M904 122l3 3" stroke="#333" stroke-width="1.200"/>
<circle cx="959" cy="125.500" r="5" fill="#ccc"/><rect x="954" y="120" width="5" height="11" fill="#333"/><path d="M958 120v11" stroke="#ccc"/>
<circle cx="1011" cy="125.500" r="6" fill="#1aa7a5" stroke="#222" stroke-width=".7"/><text x="1011" y="128" font-size="5.500" fill="#123" text-anchor="middle">ON</text>
<path d="M1180 123h9l-4.500 5z" fill="#bfbfbd"/>

<!-- right panel icons -->
<path d="M1672.500 155l10 5.500v11.500l-10 6-10-6v-11.500z" fill="#e9903c" stroke="#2e2e2c" stroke-width="1"/><path d="M1662.500 160.500l10 5.500 10-5.500M1672.500 166v12" fill="none" stroke="#2e2e2c"/>
<rect x="1703" y="158" width="16" height="17" fill="none" stroke="#bbb" stroke-width="1.300"/><rect x="1700.500" y="156" width="4" height="4" fill="none" stroke="#e0883b" stroke-width="1.200"/><rect x="1717" y="156" width="4" height="4" fill="none" stroke="#e0883b" stroke-width="1.200"/><rect x="1700.500" y="173" width="4" height="4" fill="none" stroke="#e0883b" stroke-width="1.200"/><rect x="1717" y="173" width="4" height="4" fill="none" stroke="#e0883b" stroke-width="1.200"/>
<path d="M1749 155l11 11.500-11 11.500-11-11.500z" fill="none" stroke="#c4c4c2" stroke-width="1.100"/><path d="M1749 155l11 11.500" stroke="#e0883b" stroke-width="1.200"/>
<path d="M1787.500 155l10 5.500v11.500l-10 6-10-6v-11.500z" fill="#c8c8c6"/><path d="M1787.500 166l10-5.500v11.500l-10 6z" fill="#e9903c"/><path d="M1777.500 160.500l10-5.500 10 5.500-10 5.500z" fill="#aaa"/>
<rect x="1819" y="158" width="16" height="17" fill="none" stroke="#bbb" stroke-width="1.300"/><rect x="1816.500" y="156" width="4" height="4" fill="none" stroke="#e0883b" stroke-width="1.200"/><rect x="1833" y="156" width="4" height="4" fill="none" stroke="#e0883b" stroke-width="1.200"/><rect x="1816.500" y="173" width="4" height="4" fill="none" stroke="#e0883b" stroke-width="1.200"/><rect x="1833" y="173" width="4" height="4" fill="none" stroke="#e0883b" stroke-width="1.200"/><path d="M1823 162l7 8M1830 162l-7 8" stroke="#ddd" stroke-width="1.600"/>
<!-- radios -->
<circle cx="1655.500" cy="220.500" r="3.800" fill="#e4e4e2" stroke="#2a2b29"/><circle cx="1655.500" cy="237" r="4.500" fill="#2c2d2b"/><circle cx="1655.500" cy="253.500" r="4.500" fill="#333432"/>
<rect x="1655" y="267" width="10" height="10" fill="#2e2f2d"/><path d="M1657 272l2.500 2.500 4-5" fill="none" stroke="#eee" stroke-width="1.500"/>
<rect x="1655" y="283" width="10" height="10" fill="#2e2f2d"/><path d="M1657 288l2.500 2.500 4-5" fill="none" stroke="#eee" stroke-width="1.500"/>
<path d="M1763 311h6l-3 3zM1701 334h6l-3 3zM1746 358h6l-3 3zM1753 381h6l-3 3z" fill="#a8a8a6"/>
<path d="M1659 404v9l5-4.500z" fill="#e0e0de"/>
<path d="M1652 430.500h8.500l-4.250 4.500zM1652 500.500h8.500l-4.250 4.500zM1652 594.500h8.500l-4.250 4.500z" fill="#dfdfdd"/>
<use href="#cmb" x="1651" y="445" width="16" height="16"/>
<use href="#sep" x="1755" y="445" width="16" height="16"/>
<use href="#sbl" x="1651" y="469" width="16" height="16"/>
<use href="#bol" x="1755" y="469" width="16" height="16"/>
<use href="#ext" x="1651" y="516" width="16" height="16"/>
<use href="#bev" x="1755" y="516" width="16" height="16"/>
<use href="#sme" x="1651" y="539" width="16" height="16"/>
<use href="#adv" x="1755" y="539" width="16" height="16"/>
<use href="#brg" x="1651" y="563" width="16" height="16"/>
<use href="#mcu" x="1651" y="610" width="16" height="16"/>
<use href="#twd" x="1755" y="610" width="16" height="16"/>
<use href="#con2" x="1651" y="633" width="16" height="16"/>
<use href="#qdr" x="1755" y="633" width="16" height="16"/>
<path d="M1713 892.500h71" stroke="#5c5d5b" stroke-width="2" stroke-dasharray="1 1"/>

<!-- timeline -->
<line x1="31" y1="904" x2="1605" y2="904" stroke="#323331" stroke-width="8" stroke-dasharray="1 30.820"/>
<line x1="31" y1="928" x2="1600" y2="928" stroke="#a8a8a6" stroke-width="12" stroke-dasharray="1 30.820"/>
<path d="M15 935.500H1600" stroke="#e0a050" stroke-width="1.600"/>
<g font-size="10.500" fill="#a6a6a4" text-anchor="middle" transform="translate(39.500 0) scale(1.0023 1) translate(-39.500 0)">
<text x="39.500" y="917">2</text><text x="71.250" y="917">4</text><text x="103" y="917">6</text><text x="134.750" y="917">8</text><text x="166.500" y="917">10</text><text x="198.250" y="917">12</text><text x="230" y="917">14</text><text x="261.750" y="917">16</text><text x="293.500" y="917">18</text><text x="325.250" y="917">20</text><text x="357" y="917">22</text><text x="388.750" y="917">24</text><text x="420.500" y="917">26</text><text x="452.250" y="917">28</text><text x="484" y="917">30</text><text x="515.750" y="917">32</text><text x="547.500" y="917">34</text><text x="579.250" y="917">36</text><text x="611" y="917">38</text><text x="642.750" y="917">40</text><text x="674.500" y="917">42</text><text x="706.250" y="917">44</text><text x="738" y="917">46</text><text x="769.750" y="917">48</text><text x="801.500" y="917">50</text><text x="833.250" y="917">52</text><text x="865" y="917">54</text><text x="896.750" y="917">56</text><text x="928.500" y="917">58</text><text x="960.250" y="917">60</text><text x="992" y="917">62</text><text x="1023.750" y="917">64</text><text x="1055.500" y="917">66</text><text x="1087.250" y="917">68</text><text x="1119" y="917">70</text><text x="1150.750" y="917">72</text><text x="1182.500" y="917">74</text><text x="1214.250" y="917">76</text><text x="1246" y="917">78</text><text x="1277.750" y="917">80</text><text x="1309.500" y="917">82</text><text x="1341.250" y="917">84</text><text x="1373" y="917">86</text><text x="1404.750" y="917">88</text><text x="1436.500" y="917">90</text><text x="1468.250" y="917">92</text><text x="1500" y="917">94</text><text x="1531.750" y="917">96</text><text x="1563.500" y="917">98</text><text x="1595.250" y="917">100</text>
</g>
<text x="407" y="930" font-size="10.500" font-weight="bold" fill="#e8e8e6" text-anchor="middle">25</text>
<!-- playback -->
<g fill="#bdbdbb">
<path d="M1687 915h1.500v12H1687zM1696 915l-6 6 6 6zM1702 915l-6 6 6 6z"/>
<path d="M1712 915h1.500v12H1712zM1723 915l-8 6 8 6z"/>
<path d="M1735 915h2v12h-2zM1746 915l-7 6 7 6z"/>
<path d="M1770 914l-11 7 11 7z"/>
<path d="M1805 915l8 6-8 6z"/>
<path d="M1830 915l8 6-8 6zM1839 915h1.500v12H1839z"/>
<path d="M1851 915l6 6-6 6zM1857 915l6 6-6 6zM1864 915h1.500v12H1864z"/>
</g>
<rect x="1735" y="913" width="2" height="16" fill="#e0703b"/>
<rect x="1814" y="913" width="2" height="16" fill="#e0703b"/>
<rect x="1781.500" y="915.500" width="12" height="12" fill="#d8103c"/>
</svg>

<!-- menu text -->
<span class="t m" style="left:27px;top:-1px">File</span>
<span class="t m" style="left:55px;top:-1px">Edit</span>
<span class="t m" style="left:84.500px;top:-1px">Create</span>
<span class="t m" style="left:127px;top:-1px">Select</span>
<span class="t m" style="left:167px;top:-1px">Modify</span>
<span class="t m" style="left:209px;top:-1px">Display</span>
<span class="t m" style="left:255px;top:-1px">Windows</span>
<span class="t m" style="left:308px;top:-1px">Mesh</span>
<span class="t m" style="left:344px;top:-1px">Edit Mesh</span>
<span class="t m" style="left:400px;top:-1px">Mesh Tools</span>
<span class="t m" style="left:463px;top:-1px">Mesh Display</span>
<span class="t m" style="left:535px;top:-1px">Curves</span>
<span class="t m" style="left:580px;top:-1px">Surfaces</span>
<span class="t m" style="left:629.500px;top:-1px">Deform</span>
<span class="t m" style="left:676px;top:-1px">UV</span>
<span class="t m" style="left:701px;top:-1px">Generate</span>
<span class="t m" style="left:753px;top:-1px">Cache</span>
<span class="t m" style="left:794px;top:-1px">Flow</span>
<span class="t m" style="left:831px;top:-1px">Arnold</span>
<span class="t m" style="left:870px;top:-1px">Help</span>
<span class="t g" style="left:1629px;top:-1px;width:52px;overflow:hidden">Workspace:</span>
<span class="t m" style="left:1686px;top:-1px">General*</span>

<!-- toolbar text -->
<span class="t g" style="left:9.500px;top:21px">Modeling</span>
<span class="t m" style="left:472.500px;top:21px;font-size:9.700px">No Live Surface</span>
<span class="t m" style="left:591.700px;top:21px;font-size:10px">Symmetry: Off</span>
<span class="t k" style="left:937px;top:21px;font-size:10px">Sign In</span>

<!-- tabs -->
<span class="t g" style="left:36.400px;top:45px">Curves</span>
<span class="t g" style="left:87px;top:45px;font-size:10px">Surfaces</span>
<span class="t" style="left:145.500px;top:45px;color:#e2e2e0">Poly Modeling</span>
<span class="t g" style="left:228px;top:45px">Sculpting</span>
<span class="t g" style="left:290.500px;top:45px">UV Editing</span>
<span class="t g" style="left:357px;top:45px">Rigging</span>
<span class="t g" style="left:411.500px;top:45px">Animation</span>
<span class="t g" style="left:478px;top:45px">Rendering</span>
<span class="t g" style="left:544px;top:45px">FX</span>
<span class="t g" style="left:575.500px;top:45px">FX Caching</span>
<span class="t g" style="left:645.700px;top:45px">Custom</span>
<span class="t g" style="left:700.600px;top:45px;font-size:10px">Substance</span>
<span class="t g" style="left:766px;top:45px">Arnold</span>
<span class="t g" style="left:816px;top:45px">Bifrost</span>
<span class="t g" style="left:866px;top:45px;font-size:9.800px">MASH</span>
<span class="t g" style="left:913px;top:45px">Motion Graphics</span>
<span class="t g" style="left:1006px;top:45px;font-size:10px">XGen</span>

<!-- outliner text -->
<span class="t" style="left:44px;top:101px;color:#dcdcda">Outliner</span>
<span class="t m" style="left:43px;top:117px">Display</span>
<span class="t m" style="left:88px;top:117px">Show</span>
<span class="t m" style="left:124.500px;top:117px">Help</span>
<span class="t d" style="left:62px;top:138px;color:#777">Search...</span>
<span class="t d" style="left:83px;top:155.700px">persp</span>
<span class="t d" style="left:83px;top:172.300px">top</span>
<span class="t d" style="left:83px;top:189px">front</span>
<span class="t d" style="left:83px;top:205.700px">side</span>
<span class="t" style="left:83px;top:222.500px">pPlane1</span>
<span class="t" style="left:83px;top:239px">pCube1</span>
<span class="t" style="left:83px;top:256px">pSphere1</span>
<span class="t" style="left:83px;top:273px">pCone1</span>
<span class="t" style="left:83px;top:289.500px">pBeachball</span>
<span class="t" style="left:83px;top:306px">pTennisball</span>
<span class="t" style="left:83px;top:323px">pFootball</span>
<span class="t" style="left:83px;top:340px;font-size:9.800px">Boxes</span>
<span class="t" style="left:83px;top:356px;font-size:9.400px">Ball_Rig1:Main_CTRL</span>
<span class="t" style="left:83px;top:373.500px">defaultLightSet</span>
<span class="t" style="left:83px;top:390px">defaultObjectSet</span>

<!-- viewport text -->
<span class="t m" style="left:293px;top:103px;font-size:10.200px">View</span>
<span class="t m" style="left:326px;top:103px;font-size:10.200px">Shading</span>
<span class="t m" style="left:375px;top:103px;font-size:10.200px">Lighting</span>
<span class="t m" style="left:424px;top:103px;font-size:10.200px">Show</span>
<span class="t m" style="left:460px;top:103px;font-size:10.200px">Renderer</span>
<span class="t m" style="left:514px;top:103px;font-size:10.200px">Panels</span>
<span class="t m" style="left:922px;top:119.500px">0.00</span>
<span class="t m" style="left:973px;top:119.500px">1.00</span>
<span class="t m" style="left:1023px;top:119px;font-size:9.400px">ACES 1.0 SDR-video (sRGB)</span>
<span class="t" style="left:944px;top:878px;font-size:9px;font-weight:bold;color:#dddddb">persp</span>

<!-- right panel text -->
<span class="t m" style="left:1648px;top:102px">Object</span>
<span class="t m" style="left:1690px;top:102px">Help</span>
<span class="t" style="left:1709px;top:131px;color:#ececea;font-weight:bold;font-size:9.800px">Multi-Component</span>
<span class="t" style="left:1666.700px;top:214.500px;font-size:10px">Pick/Marquee</span>
<span class="t" style="left:1666.700px;top:231px">Drag</span>
<span class="t d" style="left:1666.700px;top:247.700px;font-size:10px">Tweak/Marquee</span>
<span class="t" style="left:1669px;top:266px">Highlight Backfaces</span>
<span class="t" style="left:1669px;top:282px">Highlight Nearest Component</span>
<span class="t" style="left:1651px;top:307px;font-size:9.700px">Camera Based Selection</span>
<span class="t" style="left:1778px;top:307px">Off</span>
<span class="t" style="left:1651px;top:330.300px;font-size:9.600px">Symmetry</span>
<span class="t" style="left:1716px;top:330.300px">Off</span>
<span class="t" style="left:1651px;top:353.700px;font-size:9.900px">Selection Constraint</span>
<span class="t" style="left:1761.700px;top:353.700px">Off</span>
<span class="t" style="left:1833px;top:353.700px;color:#545553">0</span>
<span class="t" style="left:1651px;top:377.300px;font-size:10.200px">Transform Constraint</span>
<span class="t" style="left:1768px;top:377.300px">Off</span>
<span class="t h" style="left:1672.700px;top:403px;font-size:10px">Soft Selection</span>
<span class="t h" style="left:1668px;top:426.500px;font-size:10px">Mesh</span>
<span class="t h" style="left:1668px;top:497px;font-size:10px">Components</span>
<span class="t h" style="left:1668px;top:591px;font-size:10px">Tools</span>
<span class="t k" style="left:1673.700px;top:447px">Combine</span>
<span class="t k" style="left:1777.700px;top:447px">Separate</span>
<span class="t k" style="left:1673.700px;top:471px">Smooth</span>
<span class="t k" style="left:1777.700px;top:471px">Boolean</span>
<span class="t k" style="left:1673.700px;top:518px">Extrude</span>
<span class="t k" style="left:1777.700px;top:518px">Bevel</span>
<span class="t k" style="left:1673.700px;top:541px">Smart Extrude</span>
<span class="t k" style="left:1777.700px;top:541px">Add Divisions</span>
<span class="t k" style="left:1673.700px;top:565px">Bridge</span>
<span class="t k" style="left:1673.700px;top:612px">Multi-Cut</span>
<span class="t k" style="left:1777.700px;top:612px">Target Weld</span>
<span class="t k" style="left:1673.700px;top:635px">Connect</span>
<span class="t k" style="left:1777.700px;top:635px">Quad Draw</span>
<span class="t" style="left:1618px;top:915px;color:#5c5d5b">42</span>

<!-- vertical tabs -->
<span class="b" style="left:1859px;top:105px;writing-mode:vertical-rl;font-size:10.300px;line-height:12px;color:#8a8b89;white-space:nowrap;width:9px">Channel Box / Layer Editor</span>
<span class="b" style="left:1859px;top:248px;writing-mode:vertical-rl;font-size:10.300px;line-height:12px;color:#8a8b89;white-space:nowrap;width:9px">Attribute Editor</span>
<span class="b" style="left:1859px;top:337px;writing-mode:vertical-rl;font-size:10.300px;line-height:12px;color:#d0d0ce;white-space:nowrap;width:9px">Modeling Toolkit</span>

</div></body></html>
